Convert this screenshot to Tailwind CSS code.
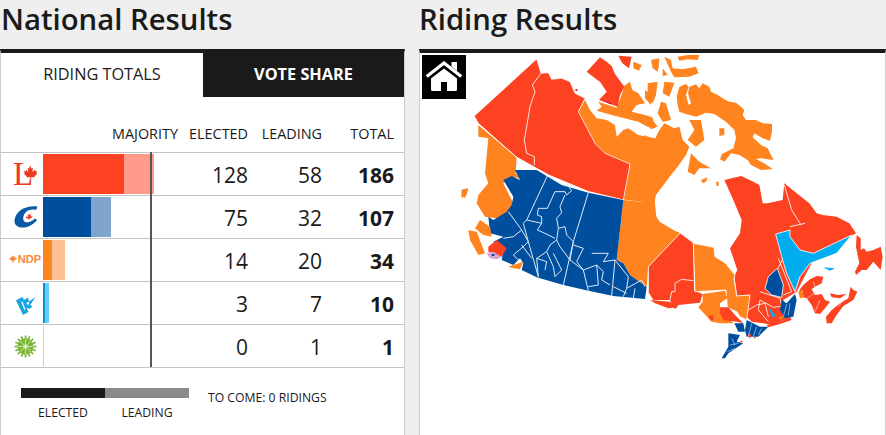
<!DOCTYPE html>
<html>
<head>
<meta charset="utf-8">
<script src="https://cdn.jsdelivr.net/npm/@tailwindcss/browser@4"></script>
</head>
<body class="m-0 bg-[#efefef]">
<div class="flex gap-[14px] w-[886px] h-[435px] overflow-hidden bg-[#efefef] text-[#1a1a1a] font-['Open_Sans',sans-serif]">

  <section class="w-[405px] shrink-0 flex flex-col">
    <h2 class="h-[49px] pl-px text-[29.300px] leading-[38px] font-semibold">National Results</h2>
    <div class="flex-1 bg-white border-t-4 border-t-[#1a1a1a] border-x border-x-[#ccc]">
      <div class="flex h-[44px] text-[16.300px] font-medium">
        <div class="w-[202px] flex items-center justify-center pb-[2px]">RIDING TOTALS</div>
        <div class="flex-1 flex items-center justify-center pb-[2px] bg-[#1a1a1a] text-white font-bold">VOTE SHARE</div>
      </div>

      <div class="grid grid-cols-[42px_135px_70px_74px_72px] h-[56px] items-end pb-[9px] text-[14.400px] leading-[18px] text-right border-b border-[#c4c4c4]">
        <span></span><span>MAJORITY</span><span>ELECTED</span><span>LEADING</span><span>TOTAL</span>
      </div>

      <div class="relative text-[21px] leading-[27px] text-right">
        <div class="absolute left-[149px] top-[-1px] w-[2px] h-[215px] bg-[#555] z-10"></div>

        <div class="grid grid-cols-[42px_135px_70px_74px_72px] h-[43px] items-center border-b border-[#c4c4c4] [&>span]:pt-[2px]">
          <div class="h-[42px] relative">
            <span class="absolute left-[12px] top-[5px] text-[33px] leading-[33px] font-['Liberation_Serif',serif] text-[#ee3a24]">L</span>
            <svg class="absolute left-[22px] top-[12px]" width="14" height="14" viewBox="0 0 24 24"><path fill="#ee3a24" d="M12 1l2.500 5 2.500-1-1 7 4-4 .8 2.500 3.200-.5-1 4 1.500 1-5 4.500.5 2-6-1-.4 3.500h-1.200l-.4-3.500-6 1 .5-2-5-4.500 1.500-1-1-4 3.200.5L5 8l4 4-1-7 2.500 1z"/></svg>
          </div>
          <div class="flex h-[40px] mt-[-1px]"><div class="w-[81px] bg-[#fc4220]"></div><div class="w-[30px] bg-[#ff9a8c]"></div></div>
          <span>128</span><span>58</span><span class="font-bold">186</span>
        </div>

        <div class="grid grid-cols-[42px_135px_70px_74px_72px] h-[43px] items-center border-b border-[#c4c4c4] [&>span]:pt-[2px]">
          <div class="h-[42px] flex items-center justify-center pl-[7px]">
            <svg width="24" height="24" viewBox="0 0 24 24"><path fill="#0b5aa5" d="M23.500 1.500C13 0 2 5 .5 15 0 21 5 23 10 22.500 15 22 20 19 23 15l-2-1.500C17 17 13 18 11 17 8 15 9 10 12 7c3-2.500 7-3 10-2z"/><path fill="#ee3a24" d="M14.500 8l1 1.800 1.500-.6-.5 2.300 2-.5-.4 1.400-2.600 1.300-.8 1-.2-1-2.800-.8.4-1.300 2 .4-.7-2.200 1.300.5z"/></svg>
          </div>
          <div class="flex h-[40px] mt-[-1px]"><div class="w-[48px] bg-[#004f9f]"></div><div class="w-[20px] bg-[#7fa5cd]"></div></div>
          <span>75</span><span>32</span><span class="font-bold">107</span>
        </div>

        <div class="grid grid-cols-[42px_135px_70px_74px_72px] h-[43px] items-center border-b border-[#c4c4c4] [&>span]:pt-[2px]">
          <div class="h-[42px] flex items-center justify-end gap-[1px] pb-[2px] pr-[2px]">
            <svg width="8" height="8" viewBox="0 0 10 10"><path fill="#f58a3a" d="M5 0l1.200 2.500L8 2l-.5 2 2.500-.3-1 2.300L6 7l-.5 3h-1L4 7 1 6 0 3.700 2.500 4 2 2l1.800.5z"/></svg>
            <div class="text-[11px] leading-[10px] font-bold font-['Liberation_Sans',sans-serif] text-[#f58a3a]">NDP</div>
          </div>
          <div class="flex h-[40px] mt-[-1px]"><div class="w-[9px] bg-[#ff8420]"></div><div class="w-[13px] bg-[#ffc091]"></div></div>
          <span>14</span><span>20</span><span class="font-bold">34</span>
        </div>

        <div class="grid grid-cols-[42px_135px_70px_74px_72px] h-[43px] items-center border-b border-[#c4c4c4] [&>span]:pt-[2px]">
          <div class="h-[42px] flex items-center justify-center pl-[7px]">
            <svg width="20" height="23" viewBox="0 0 20 23"><path fill="#16a5e0" d="M0 8.500Q3 6 6.500 5L8 8 12 5.500 13 9.500 19.500 5 15.500 11 14 13 16.500 14.500 13.500 17 10.500 15.500 12.500 20 7 23z"/><path fill="#fff" d="M6.500 9.500l3 8-1.200.5-3-8zM10.500 10.500l2-.8.8 2.200-2 .8z"/></svg>
          </div>
          <div class="flex h-[40px] mt-[-1px]"><div class="w-[2px] bg-[#0b8fcf]"></div><div class="w-[4px] bg-[#66cff5]"></div></div>
          <span>3</span><span>7</span><span class="font-bold">10</span>
        </div>

        <div class="grid grid-cols-[42px_135px_70px_74px_72px] h-[43px] items-center border-b border-[#c4c4c4] [&>span]:pt-[2px]">
          <div class="h-[42px] flex items-center justify-center pl-[6px]">
            <svg width="23" height="23" viewBox="-12 -12 24 24">
              <circle r="8.500" fill="#7fb73c"/>
              <g stroke="#7fb73c" stroke-width="1.800">
                <line y1="-11.500" y2="11.500"/><line x1="-11.500" x2="11.500"/>
                <line x1="-8" y1="-8" x2="8" y2="8"/><line x1="-8" y1="8" x2="8" y2="-8"/>
                <line x1="-4.400" y1="-10.600" x2="4.400" y2="10.600"/><line x1="4.400" y1="-10.600" x2="-4.400" y2="10.600"/>
                <line x1="-10.600" y1="-4.400" x2="10.600" y2="4.400"/><line x1="-10.600" y1="4.400" x2="10.600" y2="-4.400"/>
              </g>
              <g stroke="#d5e8b4" stroke-width=".9">
                <line y1="-8" y2="8"/><line x1="-8" x2="8"/><line x1="-5.600" y1="-5.600" x2="5.600" y2="5.600"/><line x1="-5.600" y1="5.600" x2="5.600" y2="-5.600"/>
              </g>
              <circle r="2.200" fill="#e4f0cd"/>
            </svg>
          </div>
          <div class="h-[40px] mt-[-1px]"><div class="w-px h-full bg-[#c5d79a]"></div></div>
          <span>0</span><span>1</span><span class="font-bold">1</span>
        </div>
      </div>

      <div class="flex pl-[20px] pt-[20px] text-[12.200px] leading-[16px]">
        <div class="w-[168px]">
          <div class="flex h-[10px]"><div class="w-[84px] bg-[#1a1a1a]"></div><div class="w-[84px] bg-[#8a8a8a]"></div></div>
          <div class="flex mt-[7px] text-center"><span class="w-[84px]">ELECTED</span><span class="w-[84px]">LEADING</span></div>
        </div>
        <div class="ml-[19px] mt-[2px]">TO COME: 0 RIDINGS</div>
      </div>
    </div>
  </section>

  <section class="flex-1 flex flex-col min-w-0">
    <h2 class="h-[49px] text-[29.300px] leading-[38px] font-semibold">Riding Results</h2>
    <div class="relative flex-1 bg-white border-t-4 border-t-[#1a1a1a] border-x border-x-[#ccc] overflow-hidden">
      <svg class="block" width="465" height="382" viewBox="420 53 465 382">
        <g transform="translate(415 40) scale(.33333)" stroke="#fff" stroke-width="2" stroke-linejoin="round">
          <path fill="#ff8420" stroke="none" d="M510 180L525 210 545 235 575 240 600 255 605 290 625 270 640 265 670 285 720 295 720 492 625 480 645 372 570 340 540 310 490 215z"/>
          <path fill="#ff8420" stroke="none" d="M550 185L580 195 605 203 618 170 628 137 645 125 652 150 670 160 690 190 665 195 650 215 690 225 712 232 718 250 700 262 670 245 640 238 590 225 545 212 560 200z"/>
          <path fill="#ff8420" stroke="none" d="M655 65L680 75 672 92 655 85zM690 150L712 165 708 195 690 175z"/>
          <path fill="#fc4220" stroke="none" d="M515 95L555 52 575 65 590 78 600 102 628 140 615 165 608 200 552 180 575 155 555 125 540 115zM610 47L650 50 642 85 622 70z"/>
          <path fill="#c8104f" stroke="none" d="M478 150l8-4 3 8zM555 178l35 12-3 3z"/>
          <path fill="#ff8420" stroke="none" d="M190 255L305 352 302 400 315 415 290 410 265 430 295 490 275 520 245 535 210 530 185 490 190 465 220 430 210 400 220 295 190 290zM140 450L160 445 155 465 140 475z"/>
          <path fill="#fc4220" d="M178 228L365 57 378 100 400 98 410 118 440 115 465 125 480 160 510 175 490 215 540 310 570 340 645 372 625 480 520 455 400 405 305 352 190 250z"/>
          <path fill="none" stroke-width="2.500" d="M378 100L352 135 360 155 345 200 335 260 328 300 335 340 358 350 358 375"/>
          <path fill="none" stroke-width="2.500" d="M190 252L305 352 400 405 520 455 625 480 720 492"/>
        </g>

        <g transform="translate(460 170) scale(.33333)" stroke-linejoin="round">
          <path fill="#ff8420" d="M490 90L585 100 590 150 640 180 660 190 565 290 560 350 510 315 490 280 470 270z"/>
          <path fill="#004f9f" d="M230 0L305 45 385 68 490 90 470 270 490 280 510 315 560 350 555 387 460 378 385 362 310 345 230 322 185 300 190 280 180 265 160 285 125 270 130 245 100 215 130 200 90 190 85 140 100 150 140 125 155 105 160 80 130 30 155 18 180 30 165 0z"/>
          <path fill="#ff8420" d="M145 290L190 275 180 298 160 295zM25 180L50 185 75 250 55 255 30 210zM45 175L60 150 90 170 95 200 70 195zM5 60L22 55 15 85 5 75z"/>
          <path fill="#fc4220" d="M85 230L110 210 140 235 125 260 100 250 85 245z"/>
          <path fill="#d9a6cf" d="M80 250L100 245 125 262 110 268 90 265z"/>
          <path fill="#004f9f" d="M95 252h8v6h-8z"/>
          <g fill="none" stroke="#dfe9f5" stroke-width="3">
            <path d="M262 18L200 150 190 160 205 215 235 320M200 150L245 160 232 180 255 190 285 205"/>
            <path d="M385 68L340 215 310 345M340 215L330 270 370 300 385 362"/>
            <path d="M320 42L335 62 320 75 315 65 285 65 262 115 235 115 232 135 245 140 245 160M315 75L300 110 305 128 290 145 295 175 315 170 320 195 340 215"/>
            <path d="M295 175L290 210 270 225 260 245 230 265 235 320M290 210L300 230 330 270M260 245L280 290 285 320 305 300 280 250M230 265L260 275 255 300M185 225L215 265M145 125L185 180 160 200 130 205M185 180L205 215 190 230 160 255 175 270"/>
            <path d="M340 225L370 235 350 275 370 300 410 285 415 345 385 350M410 285L430 305 425 330 450 345M395 250L445 250 430 275 465 270 455 378M465 270L505 320 500 355 545 330 555 350M500 355L490 380M525 355L520 385M460 350L500 370"/>
          </g>
        </g>

        <g transform="translate(646 40) scale(.33333)" fill="#ff8420" stroke-linejoin="round">
          <path d="M95 50L125 45 160 45 155 60 125 58 100 62zM55 50L75 60 80 85 110 88 150 80 158 100 130 110 85 112 75 95zM15 60L40 55 38 80 35 95 20 85zM50 85L65 105 50 108zM5 130L35 125 30 165 20 190 5 170zM55 125L85 128 70 170 50 160zM45 185L60 190 75 240 50 245 35 220zM15 235L35 260 15 268 5 255z"/>
          <path d="M95 195L92 170 100 140 120 132 128 140 120 165 128 195 135 190 126 160 130 140 150 133 160 145 170 130 190 140 195 155 215 165 235 178 250 185 270 188 285 200 295 210 290 225 300 240 330 240 350 250 378 252 378 275 372 302 350 295 325 280 320 292 345 315 365 325 375 345 383 360 345 355 330 357 355 370 380 387 345 390 315 375 305 360 280 345 255 340 235 365 222 358 228 342 262 325 270 295 265 270 240 245 205 222 180 218 150 230 120 222 100 215z"/>
          <path d="M135 340L160 365 195 385 160 385 145 405 125 395zM130 240L165 240 175 300 150 320 125 300 145 270zM220 265L235 265 235 285 220 288zM165 420L185 412 180 425 170 430zM210 425L218 425 218 438 212 438z"/>
          <path d="M-5 285L25 300 40 270 55 250 85 265 100 260 110 300 130 320 120 345 95 380 75 405 30 465 25 490 25 520 50 560 100 578 60 640 -5 640z"/>
        </g>

        <g transform="translate(640 220) scale(.33333)" stroke-linejoin="round">
          <path fill="#fc4220" d="M253 -120L303 -132 340 -115 358 -105 368 -50 383 -50 428 -60 433 -110 470 -80 508 -50 530 -20 548 -15 590 -10 628 10 648 40 630 50 530 100 470 215 430 240 450 290 420 305 395 315 370 310 335 305 320 290 325 240 330 225 290 228 282 170 292 150 270 85 300 40 305 0 280 -60z"/>
          <path fill="none" stroke="#fff" stroke-width="2.500" d="M433 -105L455 -30 480 10 482 15M450 20L495 10M290 228L282 170M430 115L400 170"/>
          <path fill="#fc4220" d="M120 40L160 70 162 212 188 222 180 248 115 255 105 268 90 240 40 240 25 215 25 140z"/>
          <path fill="#fc4220" d="M30 240L90 245 115 262 85 265 45 250z"/>
          <path fill="#ff8420" stroke="#fff" stroke-width="2.500" d="M160 70L222 82 225 110 255 128 285 165 282 175 290 228 330 225 320 300 300 290 290 275 262 262 258 210 165 215z"/>
          <path fill="#ff8420" d="M188 222L255 212 262 235 240 250 240 265 262 290 280 310 240 310 215 305 175 262 188 245z"/>
          <path fill="#fc4220" d="M240 262L265 262 285 285 310 310 290 305 250 300 240 280zM205 287L220 285 220 300 212 302z"/>
          <path fill="none" stroke="#fff" stroke-width="2.500" d="M105 215L105 190 125 178 160 182M105 215L95 215 90 240M120 40L25 140 25 215"/>
          <path fill="#00aeef" stroke="#fff" stroke-width="2.500" d="M407 42L450 30 450 50 480 90 520 100 635 45 590 100 510 130 480 170 465 215 440 160 425 110z"/>
          <path fill="#00aeef" d="M550 142L585 145 570 152zM387 262L408 288 395 292z"/>
          <path fill="#004f9f" stroke="#fff" stroke-width="2.500" d="M412 145L430 195 425 232 395 225 375 205 385 170z"/>
          <path fill="none" stroke="#fff" stroke-width="2.500" d="M415 115L455 215 430 225M360 215L420 235 425 258 400 262 360 240 355 270 385 305M325 270L350 255 375 250 385 290"/>
          <path fill="#fc4220" d="M478 210L490 195 510 178 530 168 550 170 545 190 525 200 515 208 525 225 545 222 555 240 570 245 555 265 540 282 525 280 515 255 500 235 488 232z"/>
          <path fill="#ff8420" d="M475 215L488 208 492 232 480 235z"/>
          <path fill="#fc4220" d="M560 310L558 290 575 270 600 250 625 235 632 200 640 210 652 215 640 240 610 258 590 285 575 310zM570 220L595 225 620 222 600 235 575 232zM650 45L662 55 662 90 672 85 680 95 700 90 722 80 728 110 722 150 700 125 680 150 665 150 648 165 645 155 658 130 648 80zM380 315L420 305 450 290 455 300 420 312 385 322z"/>
          <path fill="none" stroke="#fff" stroke-width="1.500" d="M500 235L530 215 520 185M540 240L525 275M595 260L610 240"/>
          <path fill="#004f9f" d="M283 310L310 310 315 335 295 335zM320 300L360 320 385 320 355 350 320 350 315 330zM265 340L300 345 290 365 310 370 265 400 255 415 245 415 265 380zM425 240L440 250 465 222 470 240 460 290 435 295 420 270z"/>
          <path fill="#fc4220" d="M322 340l12 4-4 12zM300 362l10 2-8 4zM340 350l8 0-4 6z"/>
          <path fill="#ff8420" d="M415 292l12-4 2 8-10 4z"/>
          <path fill="none" stroke="#fff" stroke-width="1.500" d="M335 310L325 350M350 320L340 350M365 325L355 345M440 252L430 290M450 250L445 285M275 355L285 375M270 375L295 370M262 395L285 385"/>
        </g>
      </svg>

      <button class="absolute left-[2px] top-[2px] w-[44px] h-[44px] pb-[2px] bg-black flex items-center justify-center">
        <svg width="36" height="30" viewBox="0 0 36 30">
          <path fill="#fff" d="M25.500 1h5.500v9l-5.500-4.500z"/>
          <path fill="none" stroke="#fff" stroke-width="3.200" stroke-linecap="square" d="M2 14.500L18 2 34 14.500"/>
          <path fill="#fff" d="M18 7.500L31 17.500V28.500A1.500 1.500 0 0 1 29.500 30H21V21H15V30H6.500A1.500 1.500 0 0 1 5 28.500V17.500z"/>
        </svg>
      </button>
    </div>
  </section>
</div>
</body>
</html>
